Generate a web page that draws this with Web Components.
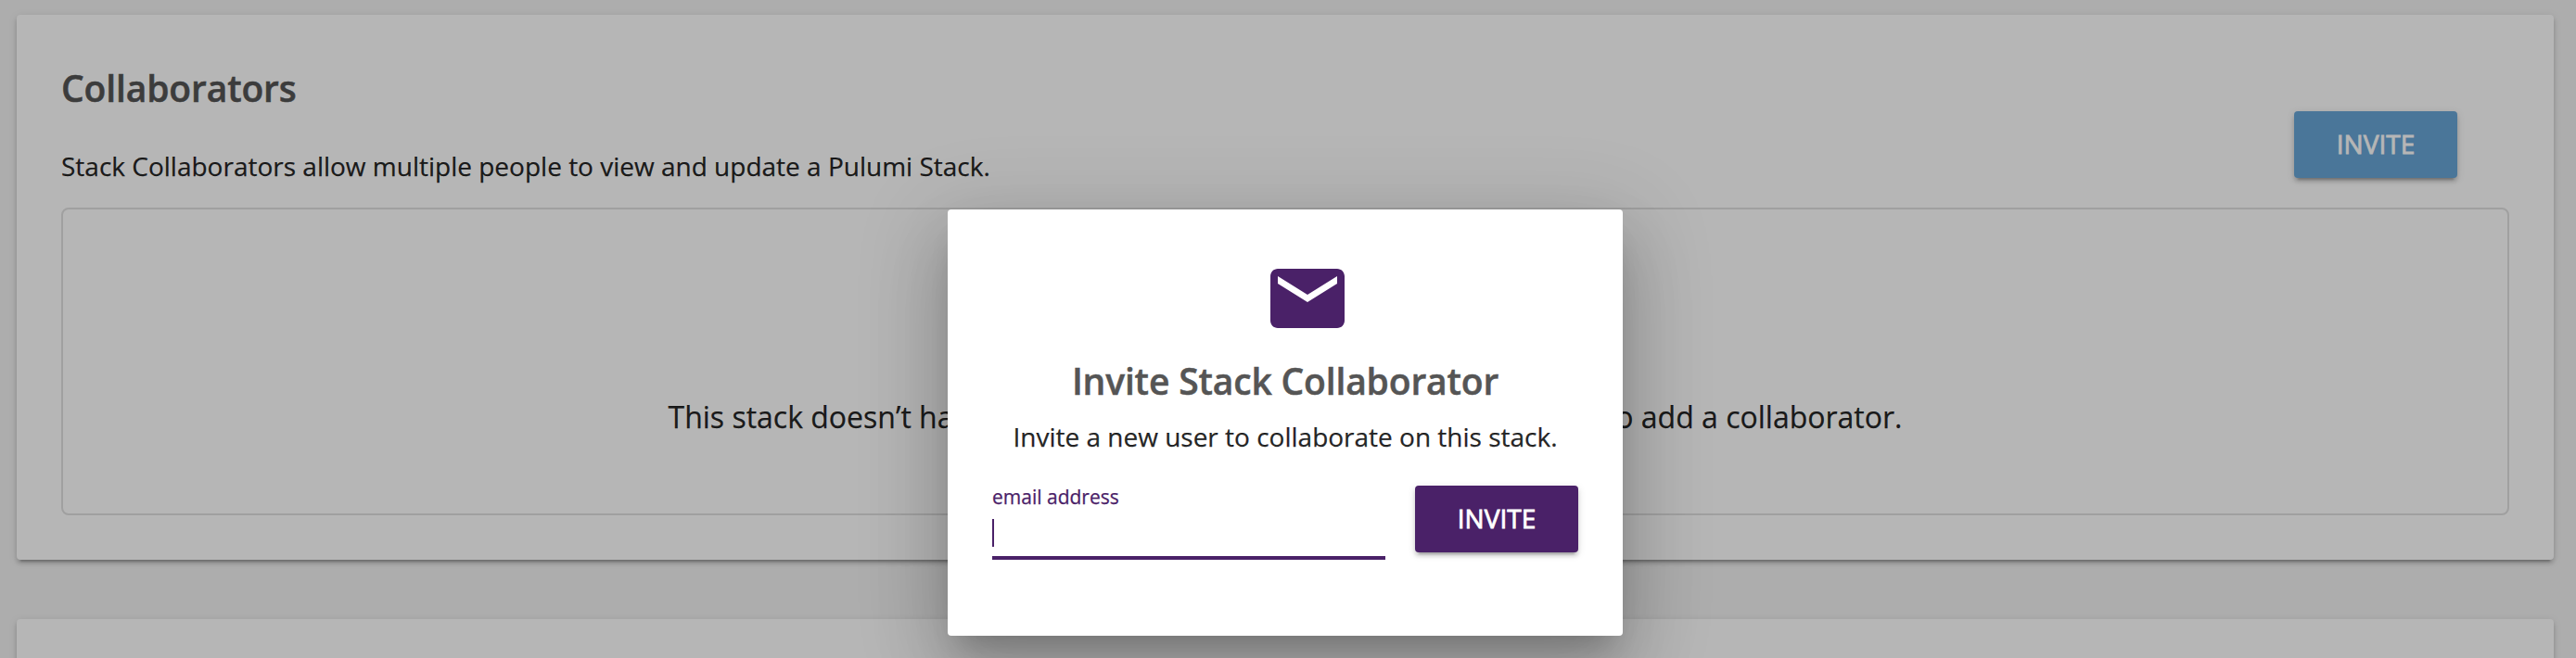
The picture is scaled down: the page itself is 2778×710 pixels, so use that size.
<!DOCTYPE html>
<html lang="en">
<head>
<meta charset="utf-8">
<title>Stack Collaborators</title>
<style>
html, body { margin: 0; height: 710px; overflow: hidden; background: #f3f3f3; }
body { font-family: "Open Sans", "Noto Sans", sans-serif; color: rgba(0,0,0,.87); -webkit-text-stroke: .25px currentColor; }
</style>
</head>
<body>
<stack-page>
  <stack-card>
    <card-header>
      <stack-heading style="letter-spacing:-.14px">Collaborators</stack-heading>
      <span slot="text">Stack Collaborators allow multiple people to view and update a Pulumi Stack.</span>
      <raised-button slot="action">INVITE</raised-button>
    </card-header>
    <empty-state></empty-state>
  </stack-card>
  <stack-card></stack-card>
  <invite-dialog slot="dialog">
    <mail-icon slot="icon"></mail-icon>
    <stack-heading slot="title" style="letter-spacing:-.16px">Invite Stack Collaborator</stack-heading>
    <span slot="text">Invite a new user to collaborate on this stack.</span>
    <text-field slot="field">email address</text-field>
    <raised-button slot="action" style="--button-bg:#4a2168;--button-fg:#fff">INVITE</raised-button>
  </invite-dialog>
</stack-page>
<script>
const define = (name, html) => customElements.define(name, class extends HTMLElement {
  constructor() {
    super();
    this.attachShadow({ mode: 'open' }).innerHTML = html;
  }
});

define('stack-page', `<style>
  :host { display: block; height: 710px; overflow: hidden; position: relative; }
  main { display: flex; flex-direction: column; gap: 64px; width: 2736px; padding: 16px 0 0 18px; }
  .scrim { position: absolute; inset: 0; background: rgba(0,0,0,.288); }
  .layer { position: absolute; left: 0; top: 0; width: 2772px; display: flex; justify-content: center; padding-top: 226px; }
</style><main><slot></slot></main><div class="scrim"></div><div class="layer"><slot name="dialog"></slot></div>`);

define('stack-card', `<style>
  :host { display: block; box-sizing: border-box; height: 588px; flex: none; padding: 0 48px 48px; background: #fff; border-radius: 4px;
    box-shadow: 0 6px 2px -4px rgba(0,0,0,.2), 0 4px 4px 0 rgba(0,0,0,.14), 0 2px 10px 0 rgba(0,0,0,.12); }
</style><slot></slot>`);

define('card-header', `<style>
  :host { display: flex; justify-content: space-between; height: 208px; padding-right: 56px; }
  .copy { padding-top: 55px; }
  p { margin: 40px 0 0; font-size: 28px; line-height: 40px; white-space: nowrap; }
  .action { padding-top: 104px; }
</style><div class="copy"><slot></slot><p><slot name="text"></slot></p></div><div class="action"><slot name="action"></slot></div>`);

define('stack-heading', `<style>
  :host { display: block; font-size: 39px; line-height: 48px; font-weight: 600; color: #555; white-space: nowrap; -webkit-text-stroke: .5px #555; }
</style><slot></slot>`);

define('raised-button', `<style>
  :host { display: block; }
  button { display: block; box-sizing: border-box; width: 176px; height: 72px; padding: 0 0 2px; border: 0; border-radius: 4px;
    background: var(--button-bg, #68a6d7); color: var(--button-fg, #fff); font: 400 28px/70px "Open Sans", "Noto Sans", sans-serif;
    -webkit-text-stroke: .8px currentColor; text-align: center;
    box-shadow: 0 6px 2px -4px rgba(0,0,0,.2), 0 4px 4px 0 rgba(0,0,0,.14), 0 2px 10px 0 rgba(0,0,0,.12); }
</style><button><slot></slot></button>`);

define('empty-state', `<style>
  :host { display: flex; justify-content: center; align-items: flex-end; box-sizing: border-box; height: 332px; padding-bottom: 80px;
    border: 2px solid #e0e0e0; border-radius: 8px; }
  p { display: flex; justify-content: space-between; width: 1331px; margin: 0; font-size: 32px; line-height: 48px; white-space: nowrap; }
</style><p><span>This stack doesn’t ha</span><span>o add a collaborator.</span></p>`);

define('mail-icon', `<style>
  :host { display: block; width: 96px; height: 96px; }
  svg { display: block; width: 96px; height: 96px; fill: #4a2168; }
</style><svg viewBox="0 0 24 24"><path d="M20 4H4c-1.100 0-1.990.900-1.990 2L2 18c0 1.100.900 2 2 2h16c1.100 0 2-.900 2-2V6c0-1.100-.900-2-2-2zm0 4l-8 5-8-5V6l8 5 8-5v2z"/></svg>`);

define('text-field', `<style>
  :host { display: flex; flex-direction: column; height: 80px; width: 424px; color: #4a2168; }
  label { font-size: 21px; line-height: 24px; height: 24px; -webkit-text-stroke: .25px #4a2168; }
  .input { flex: 1; padding-top: 12px; border-bottom: 4px solid #4a2168; }
  .caret { width: 2px; height: 30px; background: #4a2168; }
</style><label><slot></slot></label><div class="input"><div class="caret"></div></div>`);

define('invite-dialog', `<style>
  :host { display: flex; flex-direction: column; align-items: center; box-sizing: border-box; width: 728px; height: 460px; padding: 48px;
    background: #fff; border-radius: 4px;
    box-shadow: 0 22px 30px -14px rgba(0,0,0,.2), 0 48px 76px 6px rgba(0,0,0,.14), 0 18px 92px 16px rgba(0,0,0,.12); }
  .icon { margin: 0 0 17px 48px; }
  p { margin: 16px 0 33px; font-size: 28px; line-height: 40px; white-space: nowrap; }
  form { display: flex; justify-content: space-between; align-self: stretch; }
</style><div class="icon"><slot name="icon"></slot></div><slot name="title"></slot><p><slot name="text"></slot></p>
<form><slot name="field"></slot><slot name="action"></slot></form>`);
</script>
</body>
</html>
